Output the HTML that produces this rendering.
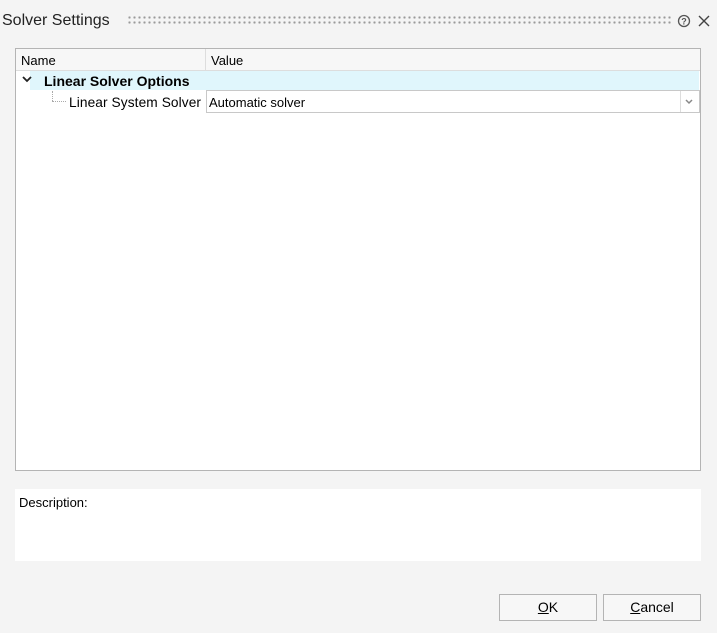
<!DOCTYPE html>
<html><head><style>
body{margin:0;width:717px;height:633px;background:#f4f4f4;font-family:"Liberation Sans",sans-serif;font-size:13px;color:#000;position:relative;overflow:hidden}
.a{position:absolute}
</style></head><body>
<div class="a" style="left:2px;top:12px;font-size:16px;color:#222">Solver Settings</div>
<div class="a" style="left:127px;top:15px;width:544px;height:10px;background-image:radial-gradient(circle,#9a9a9a 1px,transparent 1.3px);background-size:5px 5px"></div>
<svg class="a" style="left:677px;top:14px" width="14" height="14"><circle cx="7" cy="7" r="5.5" fill="none" stroke="#555" stroke-width="1.3"/><text x="7" y="10.5" font-size="9" text-anchor="middle" fill="#555" font-family="Liberation Sans" font-weight="bold">?</text></svg>
<svg class="a" style="left:698px;top:15px" width="12" height="12"><path d="M1 1L11 11M11 1L1 11" stroke="#444" stroke-width="1.4"/></svg>
<div class="a" style="left:15px;top:48px;width:684px;height:421px;background:#fff;border:1px solid #b4b4b4"></div>
<div class="a" style="left:16px;top:49px;width:684px;height:21px;background:#f7f7f7;border-bottom:1px solid #ddd"></div>
<div class="a" style="left:205px;top:49px;width:1px;height:21px;background:#ddd"></div>
<div class="a" style="left:21px;top:53px">Name</div>
<div class="a" style="left:211px;top:53px">Value</div>
<div class="a" style="left:30px;top:71px;width:669px;height:19px;background:#e0f6fc"></div>
<svg class="a" style="left:22px;top:76px" width="10" height="8"><path d="M1 1L5 5L9 1" fill="none" stroke="#222" stroke-width="1.8"/></svg>
<div class="a" style="left:44px;top:73px;font-weight:bold;font-size:14px">Linear Solver Options</div>
<div class="a" style="left:52px;top:91px;width:0;height:10px;border-left:1px dotted #aaa"></div>
<div class="a" style="left:52px;top:101px;width:14px;height:0;border-top:1px dotted #aaa"></div>
<div class="a" style="left:69px;top:95px;font-size:13.7px;letter-spacing:0.1px">Linear System Solver</div>
<div class="a" style="left:206px;top:90px;width:492px;height:21px;background:#fff;border:1px solid #c8c8c8"></div>
<div class="a" style="left:680px;top:91px;width:1px;height:21px;background:#ddd"></div>
<svg class="a" style="left:685px;top:99px" width="8" height="6"><path d="M1 1L4 4L7 1" fill="none" stroke="#888" stroke-width="1.5"/></svg>
<div class="a" style="left:209px;top:95px">Automatic solver</div>
<div class="a" style="left:15px;top:489px;width:686px;height:72px;background:#fff"></div>
<div class="a" style="left:19px;top:495px">Description:</div>
<div class="a" style="left:499px;top:594px;width:96px;height:25px;border:1px solid #b4b4b4;background:#f7f7f7;text-align:center;line-height:25px;font-size:14px"><u>O</u>K</div>
<div class="a" style="left:603px;top:594px;width:96px;height:25px;border:1px solid #b4b4b4;background:#f7f7f7;text-align:center;line-height:25px;font-size:14px"><u>C</u>ancel</div>
</body></html>
